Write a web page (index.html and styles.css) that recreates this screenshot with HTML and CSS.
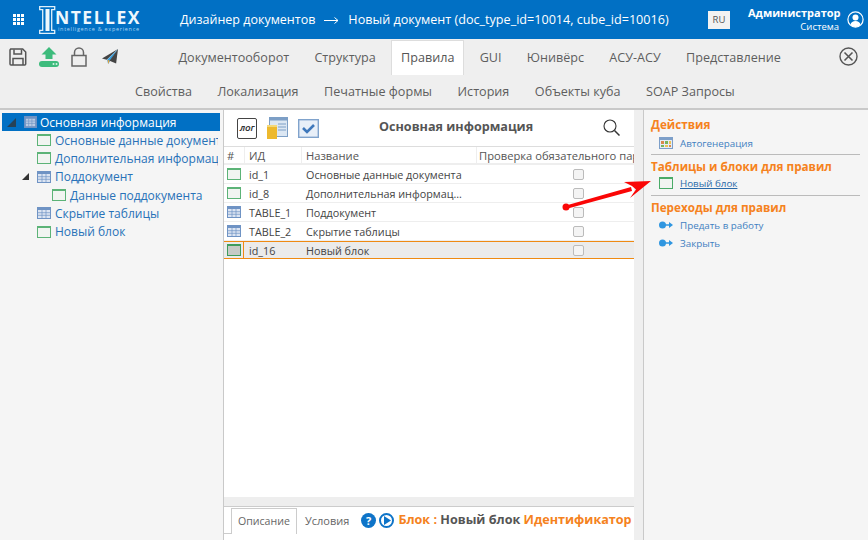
FILE: index.html
```html
<!DOCTYPE html>
<html lang="ru">
<head>
<meta charset="utf-8">
<title>Дизайнер документов</title>
<link rel="stylesheet" href="styles.css">
</head>
<body>
<div class="app">
  <header class="topbar">
    <svg class="apps" width="12" height="12" viewBox="0 0 12 12"><g fill="#fff"><rect x="0" y="0" width="3" height="3"/><rect x="4" y="0" width="3" height="3"/><rect x="8" y="0" width="3" height="3"/><rect x="0" y="4" width="3" height="3"/><rect x="4" y="4" width="3" height="3"/><rect x="8" y="4" width="3" height="3"/><rect x="0" y="8" width="3" height="3"/><rect x="4" y="8" width="3" height="3"/><rect x="8" y="8" width="3" height="3"/></g></svg>
    <div class="logo">
      <svg class="logo-i" width="17" height="28" viewBox="0 0 17 28"><path d="M.7.7h15v3h-3v20.600h3v3H.7v-3h3V3.700h-3z" fill="none" stroke="#dff0fb" stroke-width="1.300"/><rect x="6.500" y="3" width="4" height="22" fill="#eef7fd"/></svg>
      <div class="logo-text">
        <div class="logo-name">NTELLEX</div>
        <div class="logo-sub">intelligence &amp; experience</div>
      </div>
    </div>
    <div class="crumb"><span class="crumb-a">Дизайнер документов</span><svg class="crumb-arrow" width="15" height="7" viewBox="0 0 15 7"><path d="M0 3.500h14M10.500 .5l3.500 3-3.500 3" fill="none" stroke="#fff" stroke-width="1"/></svg><span>Новый документ (doc_type_id=10014, cube_id=10016)</span></div>
    <div class="lang">RU</div>
    <div class="user">
      <div class="user-name">Администратор</div>
      <div class="user-org">Система</div>
    </div>
    <svg class="avatar" width="17" height="17" viewBox="0 0 17 17"><circle cx="8.500" cy="8.500" r="7.600" fill="none" stroke="#fff" stroke-width="1.200"/><circle cx="8.500" cy="6.500" r="3" fill="#fff"/><path d="M3.400 14c.6-3 2.600-4 5.100-4s4.500 1 5.100 4a7.500 7.500 0 0 1-10.200 0z" fill="#fff"/></svg>
  </header>

  <section class="toolbar">
    <div class="tools">
      <svg width="18" height="18" viewBox="0 0 18 18"><path d="M1.700 1h12l3 3v12a1 1 0 0 1-1 1H2a1 1 0 0 1-1-1V2z" fill="none" stroke="#555" stroke-width="1.500"/><path d="M5 1.500v4.500h7.500V1.500M4 17v-6.500h10V17" fill="none" stroke="#555" stroke-width="1.500"/></svg>
      <svg class="tool-up" width="20" height="20" viewBox="0 0 20 20"><path d="M10 0l7.500 7.500H13.500v4.500h-7V7.500H2.500z" fill="#3dbb7c"/><rect x="0" y="14" width="20" height="6" rx="3" fill="#3dbb7c"/><circle cx="14.500" cy="17" r="1" fill="#d6f3e4"/><circle cx="17.500" cy="17" r="1" fill="#d6f3e4"/></svg>
      <svg class="tool-lock" width="16" height="20" viewBox="0 0 16 20"><rect x="1" y="8.500" width="14" height="10.500" fill="none" stroke="#666" stroke-width="1.500"/><path d="M3.500 8.500V5.500a4.500 4.500 0 0 1 9 0v3" fill="none" stroke="#666" stroke-width="1.500"/></svg>
      <svg class="tool-send" width="16" height="16" viewBox="0 0 17 17"><path d="M17 0L0 10l5 1.500z" fill="#444"/><path d="M17 0L5.500 11.500 6.500 16z" fill="#39a0e0"/><path d="M17 0L8 12.500l7 3z" fill="#444"/><path d="M6 11.500l.6 4.500 1.600-3.500z" fill="#e8a33c"/></svg>
    </div>
    <nav class="tabs-main">
      <a class="tab">Документооборот</a>
      <a class="tab">Структура</a>
      <a class="tab tab-active">Правила</a>
      <a class="tab">GUI</a>
      <a class="tab">Юнивёрс</a>
      <a class="tab">АСУ-АСУ</a>
      <a class="tab">Представление</a>
    </nav>
    <svg class="close" width="19" height="19" viewBox="0 0 19 19"><circle cx="9.500" cy="9.500" r="8.500" fill="none" stroke="#555" stroke-width="1.400"/><path d="M5.500 5.500l8 8M13.500 5.500l-8 8" stroke="#555" stroke-width="1.600"/></svg>
    <nav class="tabs-sub">
      <a>Свойства</a>
      <a>Локализация</a>
      <a>Печатные формы</a>
      <a>История</a>
      <a>Объекты куба</a>
      <a>SOAP Запросы</a>
    </nav>
  </section>

  <main class="panels">
    <aside class="tree">
      <div class="node node-root">
        <svg class="twist" width="9" height="9" viewBox="0 0 9 9"><path d="M9 0v9H0z" fill="#333"/></svg>
        <svg class="ico" width="13" height="12" viewBox="0 0 14 13"><rect width="14" height="13" fill="#6f93c4"/><rect x="2" y="3" width="10" height="8" fill="#b9cbe4"/><path d="M2 5.500h10M2 8h10M5 3v8M8.500 3v8" stroke="#6f93c4" stroke-width=".7"/></svg>
        <span>Основная информация</span>
      </div>
      <div class="node node-l1"><svg class="ico" width="14" height="12" viewBox="0 0 14 12"><rect x=".5" y=".5" width="13" height="11" fill="#f1f4f1" stroke="#5cb377"/><rect width="14" height="2" fill="#5cb377"/></svg><span>Основные данные документа</span></div>
      <div class="node node-l1"><svg class="ico" width="14" height="12" viewBox="0 0 14 12"><rect x=".5" y=".5" width="13" height="11" fill="#f1f4f1" stroke="#5cb377"/><rect width="14" height="2" fill="#5cb377"/></svg><span>Дополнительная информация</span></div>
      <div class="node node-l1b">
        <svg class="twist" width="7" height="7" viewBox="0 0 7 7"><path d="M7 0v7H0z" fill="#333"/></svg>
        <svg class="ico" width="14" height="12" viewBox="0 0 14 12"><rect width="14" height="12" fill="#6f93c4"/><rect x="1" y="3" width="12" height="8" fill="#dbe4f2"/><path d="M1 5.700h12M1 8.300h12M5 3v8M9 3v8" stroke="#6f93c4" stroke-width=".7"/></svg>
        <span>Поддокумент</span>
      </div>
      <div class="node node-l2"><svg class="ico" width="14" height="12" viewBox="0 0 14 12"><rect x=".5" y=".5" width="13" height="11" fill="#f1f4f1" stroke="#5cb377"/><rect width="14" height="2" fill="#5cb377"/></svg><span>Данные поддокумента</span></div>
      <div class="node node-l1"><svg class="ico" width="14" height="12" viewBox="0 0 14 12"><rect width="14" height="12" fill="#6f93c4"/><rect x="1" y="3" width="12" height="8" fill="#dbe4f2"/><path d="M1 5.700h12M1 8.300h12M5 3v8M9 3v8" stroke="#6f93c4" stroke-width=".7"/></svg><span>Скрытие таблицы</span></div>
      <div class="node node-l1"><svg class="ico" width="14" height="12" viewBox="0 0 14 12"><rect x=".5" y=".5" width="13" height="11" fill="#f1f4f1" stroke="#5cb377"/><rect width="14" height="2" fill="#5cb377"/></svg><span>Новый блок</span></div>
    </aside>

    <section class="center">
      <div class="center-head">
        <span class="log-btn">ЛОГ</span>
        <svg class="head-ico" width="21" height="22" viewBox="0 0 21 22"><rect x="2.500" y=".5" width="18" height="19" fill="#dce7f3" stroke="#7d9fc6"/><rect x="2.500" y=".5" width="18" height="3" fill="#7d9fc6"/><path d="M11 7h8M11 10h8M11 13h8" stroke="#7d9fc6"/><rect x="0" y="8" width="10" height="14" fill="#edb92e"/><rect x="0" y="8" width="10" height="2" fill="#f4d878"/></svg>
        <svg class="head-ico" width="21" height="19" viewBox="0 0 21 19"><rect x=".7" y=".7" width="19.600" height="17.600" fill="#e8eff8" stroke="#80a3cc" stroke-width="1.400"/><path d="M5 9l4 4 7-7" fill="none" stroke="#3f78bb" stroke-width="2.600"/></svg>
        <div class="head-title">Основная информация</div>
        <svg class="search" width="17" height="17" viewBox="0 0 17 17"><circle cx="7" cy="7" r="6" fill="none" stroke="#333" stroke-width="1.100"/><path d="M11.500 11.500l5 5" stroke="#333" stroke-width="1.500"/></svg>
      </div>
      <div class="grid">
        <div class="g-row g-head">
          <div class="c-num">#</div><div class="c-id">ИД</div><div class="c-name">Название</div><div class="c-check">Проверка обязательного пар</div>
        </div>
        <div class="g-row">
          <div class="c-num"><svg width="14" height="12" viewBox="0 0 14 12"><rect x=".5" y=".5" width="13" height="11" fill="#f1f4f1" stroke="#5cb377"/><rect width="14" height="2" fill="#5cb377"/></svg></div>
          <div class="c-id">id_1</div><div class="c-name">Основные данные документа</div><div class="c-check"><span class="box"></span></div>
        </div>
        <div class="g-row">
          <div class="c-num"><svg width="14" height="12" viewBox="0 0 14 12"><rect x=".5" y=".5" width="13" height="11" fill="#f1f4f1" stroke="#5cb377"/><rect width="14" height="2" fill="#5cb377"/></svg></div>
          <div class="c-id">id_8</div><div class="c-name">Дополнительная информац...</div><div class="c-check"><span class="box"></span></div>
        </div>
        <div class="g-row">
          <div class="c-num"><svg width="14" height="12" viewBox="0 0 14 12"><rect width="14" height="12" fill="#6f93c4"/><rect x="1" y="3" width="12" height="8" fill="#dbe4f2"/><path d="M1 5.700h12M1 8.300h12M5 3v8M9 3v8" stroke="#6f93c4" stroke-width=".7"/></svg></div>
          <div class="c-id">TABLE_1</div><div class="c-name">Поддокумент</div><div class="c-check"><span class="box"></span></div>
        </div>
        <div class="g-row">
          <div class="c-num"><svg width="14" height="12" viewBox="0 0 14 12"><rect width="14" height="12" fill="#6f93c4"/><rect x="1" y="3" width="12" height="8" fill="#dbe4f2"/><path d="M1 5.700h12M1 8.300h12M5 3v8M9 3v8" stroke="#6f93c4" stroke-width=".7"/></svg></div>
          <div class="c-id">TABLE_2</div><div class="c-name">Скрытие таблицы</div><div class="c-check"><span class="box"></span></div>
        </div>
        <div class="g-row g-selected">
          <div class="c-num"><svg width="14" height="12" viewBox="0 0 14 12"><rect x=".5" y=".5" width="13" height="11" fill="#c6cac6" stroke="#3f9c5c"/><rect width="14" height="2" fill="#3f9c5c"/></svg></div>
          <div class="c-id">id_16</div><div class="c-name">Новый блок</div><div class="c-check"><span class="box"></span></div>
        </div>
      </div>
      <div class="h-scroll"></div>
      <div class="bottom-tabs">
        <span class="b-tab b-tab-active">Описание</span>
        <span class="b-tab">Условия</span>
        <svg class="b-ico" width="15" height="15" viewBox="0 0 15 15"><circle cx="7.500" cy="7.500" r="7.500" fill="#0e74c8"/><text x="7.500" y="11.500" text-anchor="middle" class="q">?</text></svg>
        <svg class="b-ico" width="15" height="15" viewBox="0 0 15 15"><circle cx="7.500" cy="7.500" r="6.500" fill="none" stroke="#0e74c8" stroke-width="2"/><path d="M5 3l7 4.500-7 4.500z" fill="#0e74c8"/></svg>
        <div class="b-title"><span class="org">Блок :</span> Новый блок <span class="org">Идентификатор</span></div>
      </div>
    </section>

    <div class="v-scroll"></div>

    <aside class="side">
      <h3>Действия</h3>
      <div class="act act-first">
        <svg width="14" height="12" viewBox="0 0 14 12"><rect width="14" height="12" fill="#7d9fc9"/><rect x="1" y="3" width="12" height="8" fill="#e6edf5"/><rect x="2" y="4" width="3" height="3" fill="#d98a4a"/><rect x="6" y="4" width="3" height="3" fill="#78b35c"/><rect x="10" y="4" width="2" height="3" fill="#edc255"/><rect x="2" y="8" width="3" height="2" fill="#78b35c"/><rect x="6" y="8" width="3" height="2" fill="#edc255"/><rect x="10" y="8" width="2" height="2" fill="#d98a4a"/></svg>
        <a>Автогенерация</a>
      </div>
      <hr>
      <h3>Таблицы и блоки для правил</h3>
      <div class="act act-tight">
        <svg width="14" height="12" viewBox="0 0 14 12"><rect x=".5" y=".5" width="13" height="11" fill="#f1f4f1" stroke="#4aab68"/><rect width="14" height="2" fill="#4aab68"/></svg>
        <a class="link-u">Новый блок</a>
      </div>
      <hr class="hr-b">
      <h3>Переходы для правил</h3>
      <div class="act">
        <svg width="14" height="8" viewBox="0 0 14 8"><circle cx="3.500" cy="4" r="3.500" fill="#2f96e0"/><path d="M6 3.300h4V1l4 3-4 3V4.700H6z" fill="#2f96e0"/></svg>
        <a>Предать в работу</a>
      </div>
      <div class="act">
        <svg width="14" height="8" viewBox="0 0 14 8"><circle cx="3.500" cy="4" r="3.500" fill="#2f96e0"/><path d="M6 3.300h4V1l4 3-4 3V4.700H6z" fill="#2f96e0"/></svg>
        <a>Закрыть</a>
      </div>
    </aside>
  </main>

  <svg class="arrow" width="92" height="34" viewBox="0 0 92 34"><path d="M5 27.500L70 9l1 4L5 31z" fill="#fa0606"/><circle cx="5" cy="29" r="3.500" fill="#fa0606"/><path d="M63 4l27-1-21 17 6-8.500-4-3.500z" fill="#fa0606"/></svg>
</div>
</body>
</html>
```

FILE: styles.css
```css
* { box-sizing: border-box; }
html, body { margin: 0; padding: 0; height: 100%; overflow: hidden; }
body { font-family: "Open Sans", "Noto Sans", sans-serif; font-size: 12.600px; color: #555; background: #fff; }
svg { display: block; flex: none; }
.app { position: relative; width: 868px; height: 540px; display: flex; flex-direction: column; overflow: hidden; }

.topbar { height: 39px; background: #0170c4; color: #fff; display: flex; align-items: center; flex: none; }
.apps { margin-left: 13px; }
.logo { display: flex; align-items: center; margin-left: 14px; width: 108px; }
.logo-text { margin-left: -1px; margin-top: 2px; }
.logo-name { font-size: 17.500px; font-weight: 700; letter-spacing: 1.500px; line-height: 18px; color: #eef7fd; white-space: nowrap; }
.logo-sub { font-size: 5.500px; letter-spacing: .7px; line-height: 7px; color: #a9d3f0; margin-left: 3px; white-space: nowrap; }
.crumb { margin-left: 33px; width: 528px; white-space: nowrap; display: flex; align-items: center; font-size: 12.600px; }
.crumb-a { font-size: 12.500px; }
.crumb-arrow { margin: 1px 9px 0 9px; }
.lang { width: 22px; height: 18px; background: #f2f2f2; color: #555; font-size: 9.500px; text-align: center; line-height: 18px; }
.user { width: 91px; margin-left: 18px; text-align: right; }
.user-name { font-size: 11px; font-weight: 700; line-height: 14px; white-space: nowrap; }
.user-org { font-size: 9.500px; line-height: 13px; }
.avatar { margin-left: 8px; }

.toolbar { position: relative; height: 71px; background: #efefef; flex: none; border-bottom: 2px solid #c9c9c9; }
.tools { position: absolute; left: 9px; top: 8px; display: flex; align-items: center; gap: 12px; }
.tool-send { margin-left: 3px; }
.tabs-main { display: flex; position: absolute; left: 168.500px; top: 1px; }
.tab { display: block; height: 35px; line-height: 35px; padding: 0 10px; margin-right: 5.300px; color: #5e5e5e; white-space: nowrap; }
.tab-active { background: #fff; border: 1px solid #ddd; border-bottom: 0; padding: 0 9px; color: #555; line-height: 34px; }
.close { position: absolute; left: 839px; top: 8px; }
.tabs-sub { position: absolute; left: 135px; top: 41px; display: flex; gap: 25.500px; line-height: 24px; color: #5e5e5e; white-space: nowrap; }

.panels { flex: 1; display: flex; min-height: 0; }
.tree { width: 224px; flex: none; background: #f5f5f5; border-right: 1px solid #c9c9c9; padding: 3px 0 0 2px; font-size: 12px; }
.node { height: 18.300px; display: flex; align-items: center; color: #2872b8; white-space: nowrap; overflow: hidden; width: 216px; }
.node .ico { margin-right: 4px; }
.node-root { background: #0170c4; color: #fff; height: 18px; width: 218px; }
.node-root .twist { margin: 0 8px 0 5px; opacity: .75; }
.node-root .ico { margin-right: 3px; }
.node-l1 { padding-left: 35px; }
.node-l1b { padding-left: 20px; }
.node-l1b .twist { margin-right: 8px; }
.node-l2 { padding-left: 50px; }

.center { width: 410px; flex: none; display: flex; flex-direction: column; background: #fff; min-height: 0; }
.center-head { height: 36px; display: flex; align-items: center; padding-left: 13px; flex: none; }
.log-btn { width: 20px; height: 21px; border: 1px solid #444; border-radius: 2px; background: #fff; color: #333; font-size: 7.500px; font-weight: 700; font-style: italic; display: flex; align-items: center; justify-content: center; }
.head-ico { margin-left: 10px; }
.head-title { position: absolute; left: 379px; top: 117px; font-weight: 700; color: #555; line-height: 20px; white-space: nowrap; }
.search { position: absolute; left: 603px; top: 119px; }
.g-row { display: flex; height: 19px; border-bottom: 1px solid #eee; align-items: center; font-size: 10.800px; color: #444; white-space: nowrap; overflow: hidden; }
.g-row.g-head { height: 19px; border-top: 1px solid #ddd; border-bottom: 2px solid #eee; font-size: 11.200px; color: #555; }
.g-row > div { height: 100%; display: flex; align-items: center; }
.c-num { width: 20px; padding-left: 3px; flex: none; }
.c-id { width: 57px; padding-left: 5px; flex: none; }
.g-head .c-id, .g-head .c-check, .g-head .c-name { border-left: 1px solid #eee; padding-left: 4px; }
.c-name { width: 175px; padding-left: 5px; flex: none; }
.c-check { flex: 1; min-width: 0; overflow: hidden; }
.g-row .c-check { padding-left: 97px; }
.g-row.g-head .c-check { padding-left: 2px; }
.box { display: block; width: 11px; height: 11px; border: 1px solid #bbb; border-radius: 2px; background: #f4f4f4; }
.g-row.g-selected { background: #ebebeb; border-top: 1px solid #ef8a12; border-bottom: 1px solid #ef8a12; height: 18px; }
.g-selected .c-num { border-right: 1px solid #ef8a12; }
.h-scroll { flex: 1; border-bottom: 9px solid #eee; }
.bottom-tabs { height: 34px; flex: none; border-top: 1px solid #ccc; display: flex; align-items: flex-start; padding-top: 1px; font-size: 11px; }
.b-tab { line-height: 25px; height: 26px; color: #666; flex: none; }
.b-tab-active { border: 1px solid #ccc; border-bottom: 0; padding: 0 6px; width: 66px; margin-left: 7px; position: relative; font-size: 10.600px; }
.b-tab-active::before { content: ""; position: absolute; left: -8px; bottom: 0; width: 7px; border-bottom: 1px solid #ccc; }
.b-tab + .b-tab { margin-left: 8px; margin-right: 12px; }
.b-ico { margin: 5px 3px 0 0; }
.q { font: 700 11px "Open Sans", sans-serif; fill: #fff; }
.b-title { font-weight: 700; font-size: 12.600px; white-space: nowrap; color: #555; line-height: 24px; margin-left: 1px; }
.org { color: #f58220; }

.v-scroll { width: 10px; flex: none; background: #efefef; border-right: 1px solid #c9c9c9; }
.side { flex: 1; background: #f5f5f5; padding: 5px 8px 0 7px; }
.side h3 { margin: 0; font-size: 11.700px; line-height: 18px; font-weight: 700; color: #f58220; white-space: nowrap; }
.act { display: flex; align-items: center; height: 18px; font-size: 9.800px; color: #3f7fc1; padding-left: 8px; white-space: nowrap; }
.act svg { margin-right: 7px; }
.act-first { margin-top: 1px; }
.act-tight { margin-top: -1px; margin-bottom: 1px; }
.link-u { text-decoration: underline; color: #2a6aa8; }
.side hr { margin: 2px 0 2px; border: 0; border-top: 1px solid #bbb; }
.side .hr-b { margin-top: 3px; }

.arrow { position: absolute; left: 561px; top: 178px; }
```
